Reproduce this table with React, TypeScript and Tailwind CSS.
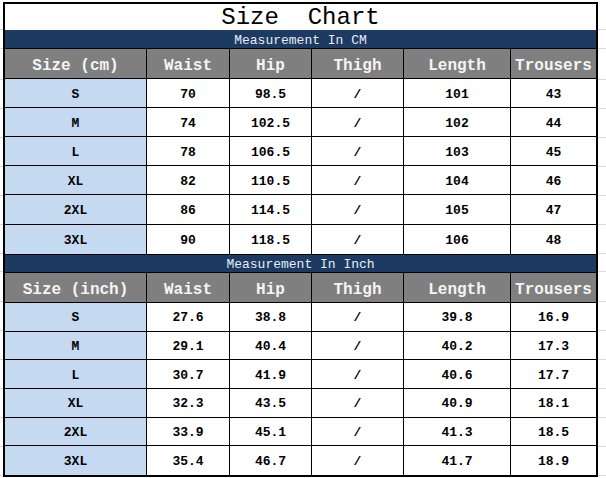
const cols = ['w-[141px]', 'w-[83px]', 'w-[82px]', 'w-[92px]', 'w-[107px]', 'w-[86px]'];

const cmRows = [
  ['S', '70', '98.5', '/', '101', '43'],
  ['M', '74', '102.5', '/', '102', '44'],
  ['L', '78', '106.5', '/', '103', '45'],
  ['XL', '82', '110.5', '/', '104', '46'],
  ['2XL', '86', '114.5', '/', '105', '47'],
  ['3XL', '90', '118.5', '/', '106', '48'],
];

const inchRows = [
  ['S', '27.6', '38.8', '/', '39.8', '16.9'],
  ['M', '29.1', '40.4', '/', '40.2', '17.3'],
  ['L', '30.7', '41.9', '/', '40.6', '17.7'],
  ['XL', '32.3', '43.5', '/', '40.9', '18.1'],
  ['2XL', '33.9', '45.1', '/', '41.3', '18.5'],
  ['3XL', '35.4', '46.7', '/', '41.7', '18.9'],
];

const mono = "font-['Liberation_Mono',monospace]";

function Band({ label, first }: { label: string; first: boolean }) {
  return (
    <div
      className={`flex items-end justify-center bg-[#1d3a63] border-b border-black text-[13px] leading-[15px] text-[#e8edf3] ${mono} ${
        first ? 'h-[19px]' : 'h-[18px]'
      }`}
    >
      {label}
    </div>
  );
}

function HeaderRow({ first, unit }: { first: string; unit: boolean }) {
  const labels = [first, 'Waist', 'Hip', 'Thigh', 'Length', 'Trousers'];
  return (
    <div className={`flex bg-[#7f7f7f] border-b border-black ${unit ? 'h-[31px]' : 'h-[30px]'}`}>
      {labels.map((l, i) => (
        <div
          key={l}
          className={`${cols[i]} ${i > 0 ? 'border-l border-black' : ''} flex items-center justify-center pt-[5px] text-[16px] font-bold text-[#f4f4f4] ${mono}`}
        >
          {l}
        </div>
      ))}
    </div>
  );
}

function DataRows({ rows }: { rows: string[][] }) {
  return (
    <>
      {rows.map((r, ri) => (
        <div
          key={ri}
          className={`flex h-[29px] ${ri < rows.length - 1 ? 'border-b border-black' : 'h-[28px]'}`}
        >
          {r.map((c, i) => (
            <div
              key={i}
              className={`${cols[i]} ${i > 0 ? 'border-l border-black bg-white' : 'bg-[#c5d9f1]'} flex items-center justify-center pt-[2px] text-[13px] font-bold text-black ${mono}`}
            >
              {c}
            </div>
          ))}
        </div>
      ))}
    </>
  );
}

function Strip({ w }: { w: string }) {
  const hs = ['h-[28px]', 'h-[19px]', 'h-[31px]', 'h-[29px]', 'h-[29px]', 'h-[29px]', 'h-[29px]', 'h-[29px]', 'h-[29px]', 'h-[18px]', 'h-[30px]', 'h-[29px]', 'h-[29px]', 'h-[29px]', 'h-[29px]', 'h-[29px]', 'h-[29px]'];
  return (
    <div className={`${w} flex flex-col`}>
      {hs.map((h, i) => (
        <div key={i} className={`${h} border-b border-[#dadada]`} />
      ))}
    </div>
  );
}

export default function App() {
  return (
    <div className="w-[606px] h-[478px] bg-white overflow-hidden pt-[2px] flex">
      <Strip w="w-[3px]" />
      <div className="w-[595px] h-[475px] border-2 border-black flex flex-col">
        <div className={`h-[26px] flex items-center justify-center pt-[2px] text-[24px] leading-[26px] text-black whitespace-pre ${mono}`}>
          {'Size  Chart'}
        </div>
        <Band label="Measurement In CM" first />
        <HeaderRow first="Size (cm)" unit />
        <div className="border-b border-black">
          <DataRows rows={cmRows.slice(0, 5)} />
          <div className="border-t border-black">
            <DataRows rows={[cmRows[5]]} />
          </div>
        </div>
        <Band label="Measurement In Inch" first={false} />
        <HeaderRow first="Size (inch)" unit={false} />
        <DataRows rows={inchRows} />
      </div>
      <Strip w="flex-1" />
    </div>
  );
}
